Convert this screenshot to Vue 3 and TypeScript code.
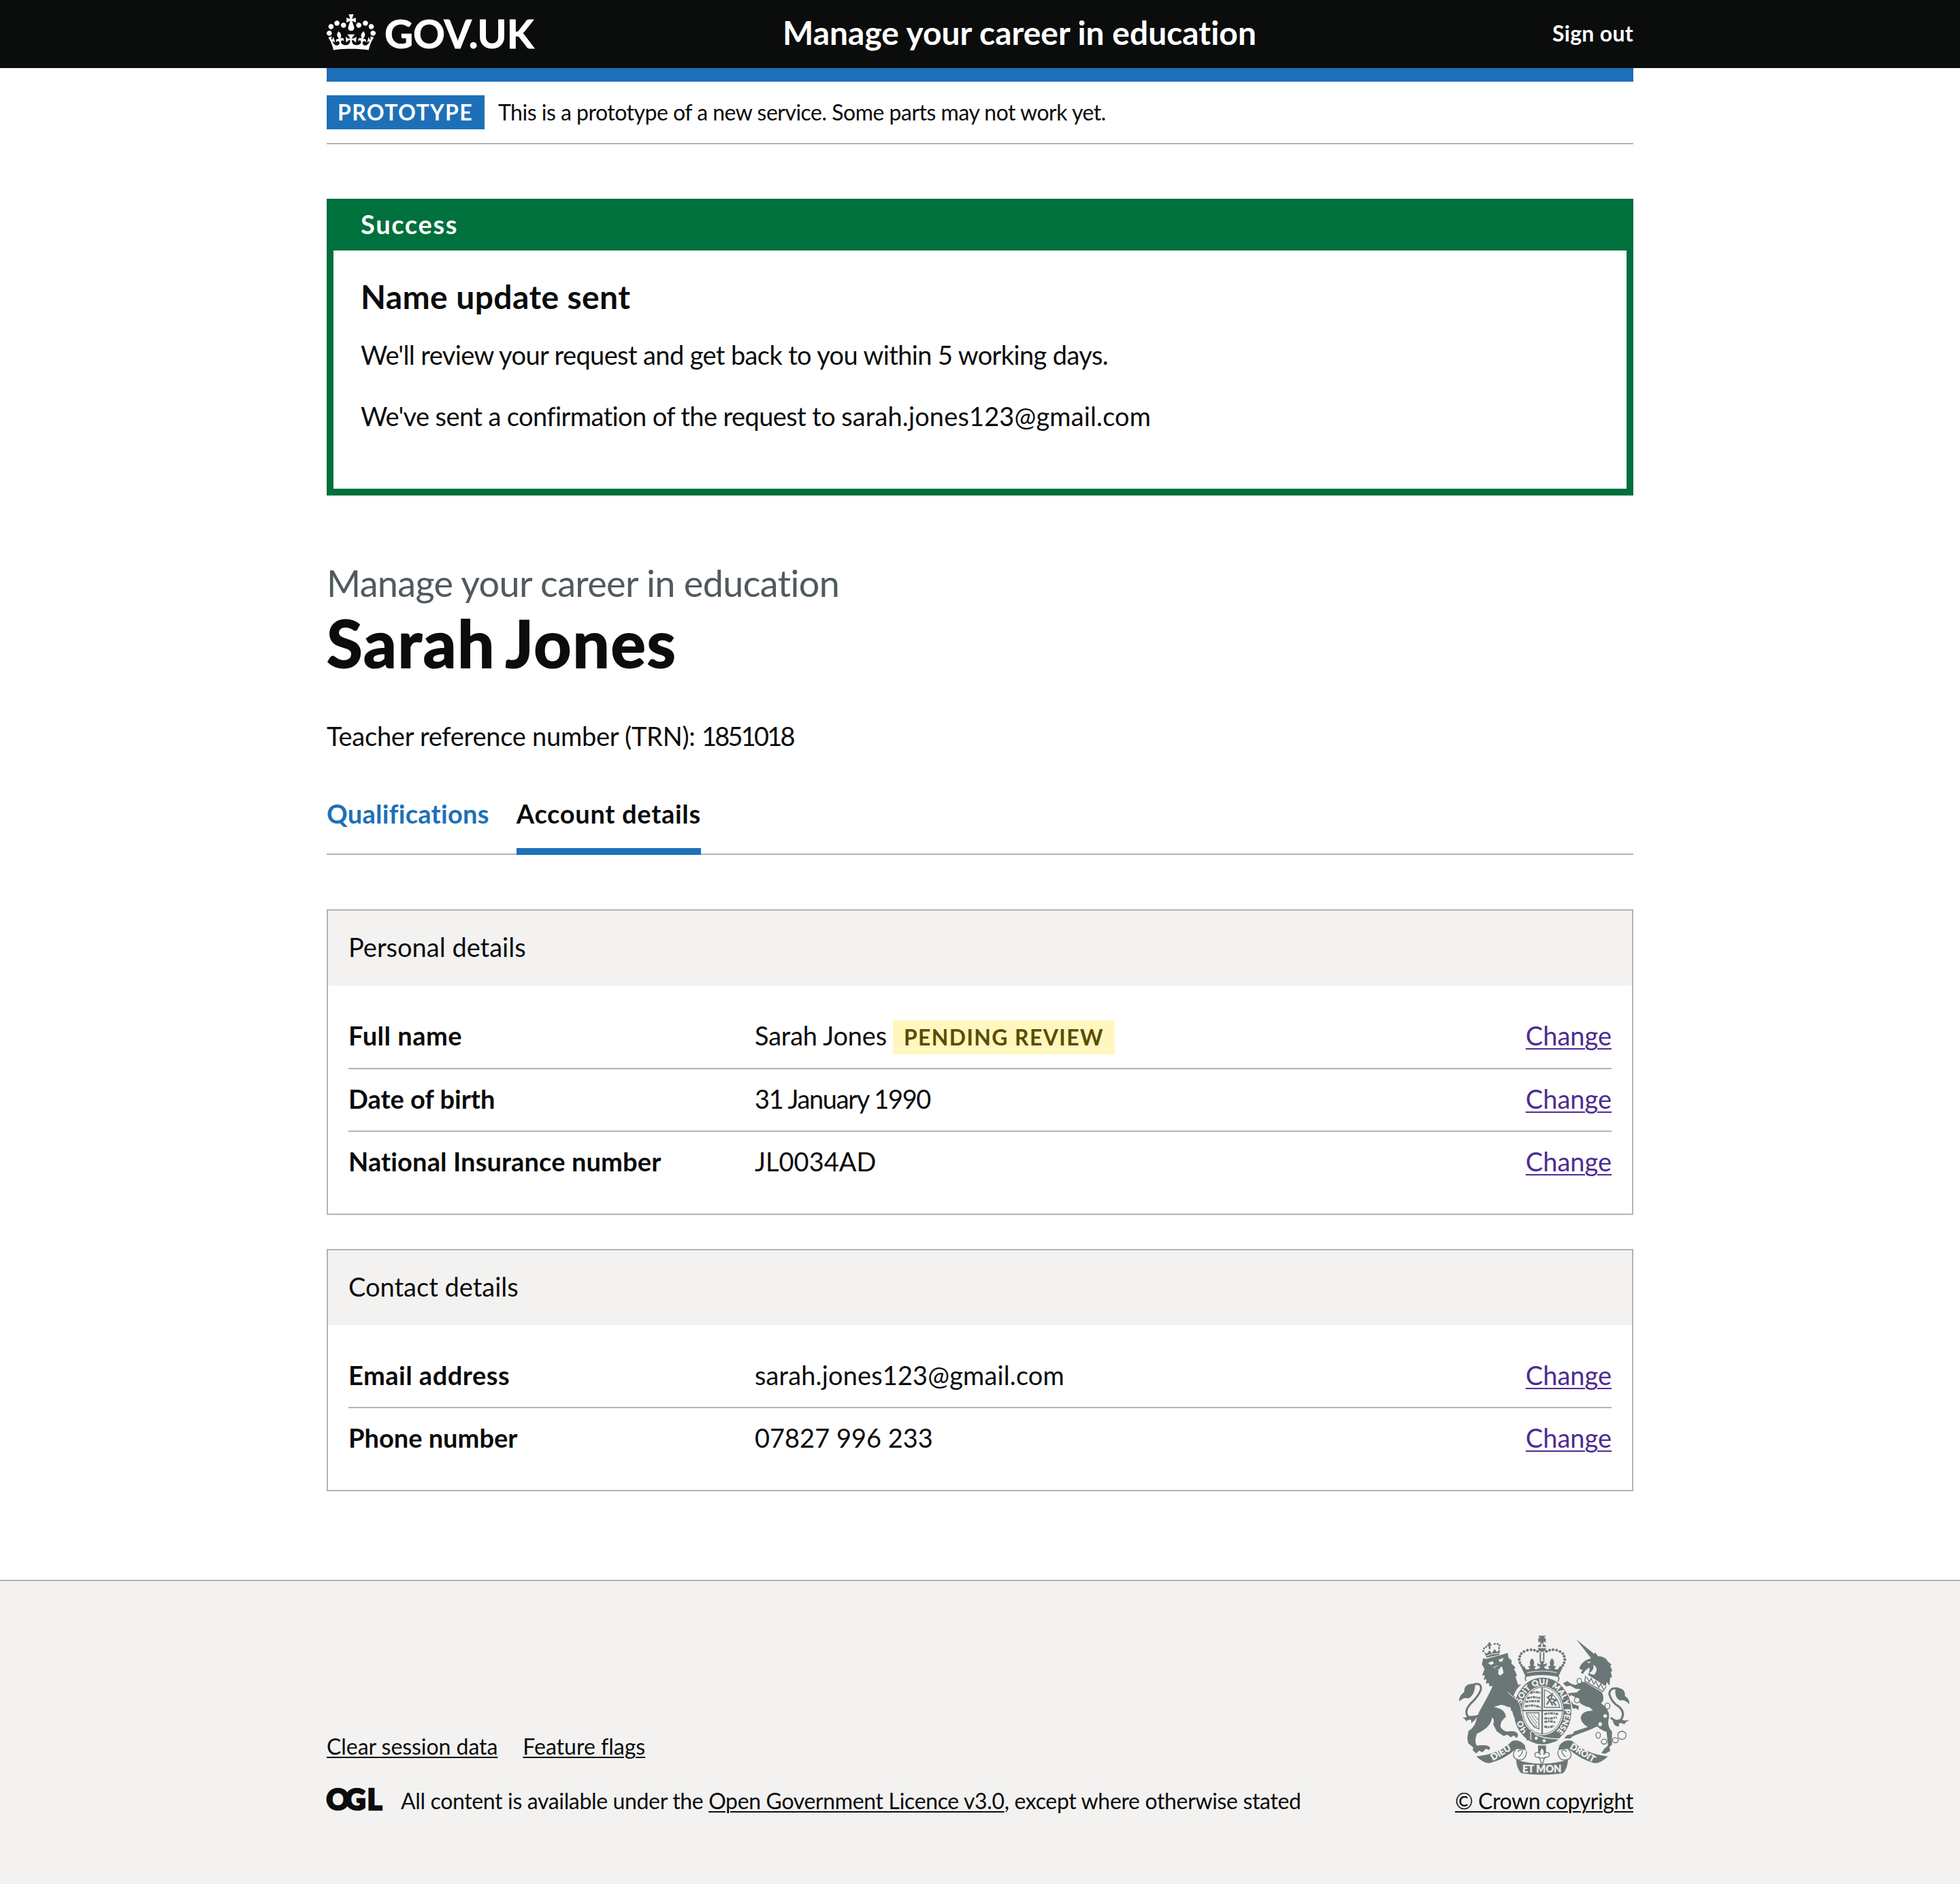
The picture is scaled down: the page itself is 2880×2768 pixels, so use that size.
<script setup lang="ts">
interface DetailRow {
  key: string
  value: string
  keyClass?: string
  valueClass?: string
  tag?: string
}

interface DetailCard {
  title: string
  rows: DetailRow[]
}

const cards: DetailCard[] = [
  {
    title: 'Personal details',
    rows: [
      { key: 'Full name', value: 'Sarah Jones', keyClass: 'loose', valueClass: 'snug', tag: 'PENDING REVIEW' },
      { key: 'Date of birth', value: '31 January 1990', valueClass: 'digits' },
      { key: 'National Insurance number', value: 'JL0034AD', keyClass: 'wide' },
    ],
  },
  {
    title: 'Contact details',
    rows: [
      { key: 'Email address', value: 'sarah.jones123@gmail.com', keyClass: 'loose', valueClass: 'wide' },
      { key: 'Phone number', value: '07827 996 233' },
    ],
  },
]

type Point = [number, number]

// Pearls along the arches of the crown, mirrored about its centre line
const pearls: Point[] = [
  [418, 137], [404, 132], [389, 130], [373, 132], [358, 138], [346, 147],
  [340, 159], [337, 173], [340, 187], [346, 199], [354, 209],
]
const lionPearls: Point[] = [[179, 136], [182, 124], [191, 117], [248, 122], [250, 111], [242, 104], [229, 104]]
const chain: [number, number, number, number][] = [
  [602, 268, 10, 12], [592, 352, 12, 12], [726, 378, 11, 13],
  [685, 507, 10, 13], [711, 535, 12, 11], [761, 529, 13, 11], [790, 507, 18, 18],
]
</script>

<template>
  <div class="page">
    <header class="header">
      <div class="container header-row">
        <a class="logo">
          <svg class="crown" viewBox="0 0 132 97" width="72" height="53" aria-hidden="true">
            <path
              fill="currentColor"
              fill-rule="evenodd"
              d="M25 30.2c3.5 1.5 7.7-.2 9.1-3.7 1.5-3.6-.2-7.8-3.9-9.2-3.6-1.4-7.6.3-9.1 3.9-1.4 3.5.3 7.5 3.9 9zM9 39.5c3.6 1.5 7.8-.2 9.2-3.7 1.5-3.6-.2-7.8-3.9-9.1-3.6-1.5-7.6.2-9.1 3.8-1.4 3.5.3 7.5 3.8 9zM4.4 57.2c3.5 1.5 7.7-.2 9.1-3.8 1.5-3.6-.2-7.7-3.9-9.1-3.5-1.5-7.6.3-9.1 3.8-1.4 3.5.3 7.6 3.9 9.1zm38.3-21.4c3.5 1.5 7.7-.2 9.1-3.8 1.5-3.6-.2-7.7-3.9-9.1-3.6-1.5-7.6.3-9.1 3.8-1.3 3.6.4 7.7 3.9 9.1zm64.4-5.6c-3.6 1.5-7.8-.2-9.1-3.7-1.5-3.6.2-7.8 3.8-9.2 3.6-1.4 7.7.3 9.2 3.9 1.3 3.5-.4 7.5-3.9 9zm15.9 9.3c-3.6 1.5-7.7-.2-9.1-3.7-1.5-3.6.2-7.8 3.7-9.1 3.6-1.5 7.7.2 9.2 3.8 1.5 3.5-.3 7.5-3.8 9zm4.7 17.7c-3.6 1.5-7.8-.2-9.2-3.8-1.5-3.6.2-7.7 3.9-9.1 3.6-1.5 7.7.3 9.2 3.8 1.3 3.5-.4 7.6-3.9 9.1zM89.3 35.8c-3.6 1.5-7.8-.2-9.2-3.8-1.4-3.6.2-7.7 3.9-9.1 3.6-1.5 7.7.3 9.2 3.8 1.4 3.6-.3 7.7-3.9 9.1zM69.7 17.7l8.9 4.7V9.3l-8.9 2.8c-.2-.3-.5-.6-.9-.9L72.4 0H59.6l3.5 11.2c-.3.3-.6.5-.9.9l-8.8-2.8v13.1l8.8-4.7c.3.3.6.7.9.9l-5 15.4v.1c-.2.8-.4 1.6-.4 2.4 0 4.1 3.1 7.5 7 8.1h.2c.3 0 .7.1 1 .1.4 0 .7 0 1-.1h.2c4-.6 7.1-4.1 7.1-8.1 0-.8-.1-1.7-.4-2.4V34l-5.1-15.4c.4-.2.7-.6 1-.9zM66 92.8c16.9 0 32.8 1.1 47.1 3.2 4-16.9 8.9-26.7 14-33.5l-9.6-3.4c1 4.9 1.1 7.2 0 10.2-1.5-1.4-3-4.3-4.2-8.7L108.6 76c2.8-2 5-3.2 7.5-3.3-4.4 9.4-10 11.9-13.6 11.2-4.3-.8-6.3-4.6-5.6-7.9 1-4.7 5.7-5.9 8-.5 4.3-8.7-3-11.4-7.6-8.8 7.1-7.2 7.9-13.5 2.1-21.1-8 6.1-8.1 12.3-4.5 20.8-4.7-5.4-12.1-2.5-9.5 6.2 3.4-5.2 7.9-2 7.2 3.1-.6 4.3-6.4 7.8-13.5 7.2-10.3-.9-10.9-8-11.2-13.8 2.5-.5 7.1 1.8 11 7.3L80.2 60c-4.1 4.4-8 5.3-12.3 5.4 1.4-4.4 8-11.6 8-11.6H55.5s6.4 7.2 7.9 11.6c-4.2-.1-8-1-12.3-5.4l1.4 16.4c3.9-5.5 8.5-7.7 10.9-7.3-.3 5.8-.9 12.8-11.1 13.8-7.2.6-12.9-2.9-13.5-7.2-.7-5 3.8-8.3 7.1-3.1 2.7-8.7-4.6-11.6-9.4-6.2 3.7-8.5 3.6-14.7-4.6-20.8-5.8 7.6-5 13.9 2.2 21.1-4.7-2.6-11.9.1-7.7 8.8 2.3-5.5 7.1-4.2 8.1.5.7 3.3-1.3 7.1-5.7 7.9-3.5.7-9-1.8-13.5-11.2 2.5.1 4.7 1.3 7.5 3.3l-4.7-15.4c-1.2 4.4-2.7 7.2-4.3 8.7-1.1-3-.9-5.3 0-10.2l-9.5 3.4c5 6.9 9.9 16.7 14 33.5 14.8-2.1 30.8-3.2 47.7-3.2z"
            />
          </svg>
          <span class="logo-text">GOV.UK</span>
        </a>
        <span class="service-name">Manage your career in education</span>
        <a class="sign-out">Sign out</a>
      </div>
    </header>

    <div class="container">
      <div class="header-bar"></div>
      <div class="phase">
        <strong class="tag">PROTOTYPE</strong>
        <span class="phase-text">This is a prototype of a new service. Some parts may not work yet.</span>
      </div>

      <main>
        <section class="banner">
          <h2 class="banner-title">Success</h2>
          <div class="banner-content">
            <h3 class="banner-heading">Name update sent</h3>
            <p class="review">We'll review your request and get back to you within 5 working days.</p>
            <p class="confirm">We've sent a confirmation of the request to <span class="wide">sarah.jones123@gmail.com</span></p>
          </div>
        </section>

        <div class="caption">Manage your career in education</div>
        <h1 class="title">Sarah Jones</h1>
        <p class="trn">Teacher reference number (TRN): <span class="trn-number">1851018</span></p>

        <nav class="tabs">
          <a class="tab">Qualifications</a>
          <a class="tab current">Account details</a>
        </nav>

        <section v-for="card in cards" :key="card.title" class="card">
          <h2 class="card-title">{{ card.title }}</h2>
          <dl class="list">
            <div v-for="row in card.rows" :key="row.key" class="row" :class="{ tagged: row.tag }">
              <dt class="key" :class="row.keyClass">{{ row.key }}</dt>
              <dd class="value">
                <span :class="row.valueClass">{{ row.value }}</span>
                <strong v-if="row.tag" class="tag tag-yellow">{{ row.tag }}</strong>
              </dd>
              <dd class="action"><a class="change">Change</a></dd>
            </div>
          </dl>
        </section>
      </main>
    </div>

    <footer class="footer">
      <div class="container footer-row">
        <div class="footer-main">
          <div class="footer-links">
            <a class="link clear">Clear session data</a>
            <a class="link">Feature flags</a>
          </div>
          <div class="licence">
            <svg class="ogl" width="84" height="49" viewBox="0 0 84 49" aria-label="OGL">
              <text x="-0.5 27 59.5" y="38">OGL</text>
            </svg>
            <span class="licence-text">All content is available under the <a class="link">Open Government Licence v3.0</a>, except where otherwise stated</span>
          </div>
        </div>
        <div class="copyright">
          <svg class="crest" viewBox="72 68 750 614" width="250" height="205" aria-hidden="true">
            <defs>
              <path id="garter" d="M440 516A97 116 0 0 1 440 284A97 116 0 0 1 440 516" />
            </defs>
            <!-- crown -->
            <path class="ink" d="M421 68H453L445 82 454 77V98L444 92 446 102H428L430 92 421 98V77L430 82Z" />
            <path class="ink" d="M434 104V118H418Q420 106 434 104ZM440 104V118H457Q454 106 440 104ZM419 123H456Q452 138 437 140 423 138 419 123ZM427 142H433V178H427ZM442 142H448V178H442Z" />
            <template v-for="([x, y], i) in pearls" :key="i">
              <circle class="ink" :cx="x" :cy="y" r="6.2" />
              <circle class="ink" :cx="875 - x" :cy="y" r="6.2" />
            </template>
            <path
              class="ink"
              d="M346 208L366 250Q437 228 509 250L528 208 515 203 510 214Q500 220 492 212L500 203 488 200Q496 180 481 168 467 180 474 200L464 203 470 212Q460 222 446 208L456 198 458 212V188Q448 196 442 194L450 180H425L433 194Q424 196 417 188V212L420 198 430 208Q412 222 404 212L411 203 400 200Q408 180 394 168 378 180 387 200L375 203 383 212Q374 222 365 214L360 203Z"
            />
            <path class="line" stroke-width="5" d="M368 268Q356 246 378 244 437 234 496 244 520 246 508 270" />
            <path class="gap" stroke-width="3" d="M372 231Q437 216 503 231" />

            <!-- lion -->
            <path class="line" stroke-width="9" d="M135 284Q172 272 168 305 158 335 122 368 92 402 112 425 130 436 156 420" />
            <path class="ink" d="M143 280Q92 276 95 316 70 334 72 358 92 338 114 344 142 330 143 280ZM86 428Q100 432 112 422L150 420Q148 440 124 454 128 444 122 438 108 438 104 446 98 434 86 428Z" />
            <path
              class="ink"
              d="M172 194L178 168 192 170 270 149 286 144 290 166 304 178 302 190 322 210 314 213 328 246 320 246 332 285 347 282Q325 300 312 332L334 352 346 388 345 420 335 428 322 413 313 425 310 402 300 398 302 384 285 382Q265 370 250 374L225 382Q276 392 278 426 252 445 255 470 268 492 290 490 326 484 332 505L327 520 312 508 300 516 285 505 268 510 238 490 222 458Q230 440 218 428 210 475 150 500 138 535 150 553 200 545 209 562L204 572 190 566 176 582 160 575 147 587 132 572 134 560 112 542 108 520 113 488Q145 470 150 430 160 400 178 372 202 330 220 290L205 290 203 276 190 280 193 260 180 262 186 244 174 242 184 215 178 204Z"
            />
            <path class="paper" d="M200 188L218 180 226 190 212 197ZM246 174L268 166 262 182 250 183ZM222 206L240 200 262 206 268 232 254 244 244 236 246 220Z" />
            <path class="ink" d="M228 206L258 198 250 216 236 216Z" />
            <path class="ink" d="M193 165L182 140 194 148 206 132 216 146 228 126 238 140 252 128 250 152Z" />
            <path class="gap" stroke-width="3" d="M190 158Q218 144 252 146" />
            <circle v-for="([x, y], i) in lionPearls" :key="'l' + i" class="ink" :cx="x" :cy="y" r="4.5" />
            <path class="ink" d="M200 99L210 97 210 104 216 105 213 114 208 112 212 126 203 127 202 114 196 115 196 106 202 106Z" />

            <!-- unicorn -->
            <path class="line" stroke-width="9" d="M775 302Q738 292 734 325 744 362 778 382 806 408 786 438 768 452 740 430" />
            <path class="ink" d="M762 297Q806 298 803 334 824 348 822 370 802 348 782 354 754 340 762 297ZM745 425Q760 448 784 436L800 442 826 440Q806 446 800 460 790 450 778 454L776 468Q760 470 752 452Z" />
            <path class="ink" d="M588 84L672 152 656 170Z" />
            <path
              class="ink"
              d="M656 166L672 142 684 158Q716 158 728 182L744 196 738 202 748 224 741 226 746 252 738 252 735 288 722 272 718 292 640 240Q650 222 646 208L628 222 618 236 608 232 616 220 602 214Q604 196 628 178Z"
            />
            <path class="paper" d="M636 184L654 182 644 190ZM664 196Q690 214 668 240 652 240 646 232 668 222 664 196Z" />
            <path class="gap" stroke-width="4" d="M628 238L722 296" />
            <path class="line" stroke-width="4" d="M630 244L626 268 706 314 720 292M634 250L646 272 654 256 666 282 674 268 688 296 696 280 708 304" />
            <path
              class="ink"
              d="M608 272L626 272 702 318Q716 350 698 366 744 398 730 440 726 470 746 490V548L735 558 738 576 716 589 699 586 712 566 728 552 722 492Q700 486 680 468L650 482 575 510 560 522 535 520 548 506 572 502 580 490 640 470Q610 455 608 428 614 398 662 398L648 384Q604 376 588 342L566 330 556 340 576 370 600 378 598 396 586 388 574 390 568 376 546 342 552 322 590 318 608 304 586 302 562 288 544 292 530 278 548 268 566 280 584 286Z"
            />
            <ellipse v-for="([x, y, rx, ry], i) in chain" :key="'c' + i" class="ring" :cx="x" :cy="y" :rx="rx" :ry="ry" />
            <ellipse class="paper" cx="716" cy="422" rx="8" ry="8" />
            <ellipse class="paper" cx="694" cy="458" rx="8" ry="9" />

            <!-- garter -->
            <ellipse class="garter-band" cx="440" cy="400" rx="129" ry="149" />
            <ellipse class="paper" cx="440" cy="398" rx="92" ry="108" />
            <text class="motto" font-size="35"><textPath href="#garter" startOffset="72">HO</textPath></text>
            <text class="motto" font-size="35"><textPath href="#garter" startOffset="200">SOIT</textPath></text>
            <text class="motto" font-size="35"><textPath href="#garter" startOffset="291">QUI</textPath></text>
            <text class="motto" font-size="35"><textPath href="#garter" startOffset="376">MAL</textPath></text>
            <text class="motto" font-size="32"><textPath href="#garter" startOffset="457">Y</textPath></text>
            <text class="motto" font-size="35"><textPath href="#garter" startOffset="493">PENSE</textPath></text>
            <ellipse class="line" stroke-width="3" cx="440" cy="398" rx="87" ry="103" />
            <path class="line" stroke-width="7" d="M438 296V500M350 398H530" />
            <path class="line" stroke-width="4" d="M448 306V384H516Q506 330 448 306ZM368 408H424V480Q384 464 368 408Z" />
            <path class="line" stroke-width="3" d="M376 414L416 470M388 414L418 456M400 414L420 440M374 426L404 474" />
            <path class="line" stroke-width="9" stroke-dasharray="13 3 6 3" d="M386 322Q404 312 430 320M372 344Q400 334 430 344M364 360Q400 354 430 358M362 380Q400 370 430 384M448 414Q476 406 508 414M448 431Q476 437 502 427M448 449Q470 441 498 451M448 468Q470 476 490 464" />
            <path class="line" stroke-width="7" d="M458 372L472 350 462 340 482 326 478 346 500 352 486 362 500 376M472 350L484 376" />
            <path class="ink" d="M362 488Q374 476 392 486L398 506Q450 530 506 520L506 530Q450 556 392 528L372 530 364 510 374 506Z" />
            <path class="gap" stroke-width="4" d="M392 488Q382 498 390 510 382 520 392 526M404 502Q450 524 510 522" />
            <circle class="paper" cx="412" cy="520" r="7" />
            <circle class="paper" cx="447" cy="531" r="7" />
            <!-- paw and hoof laid over the garter -->
            <path class="ink" d="M296 322L332 354 346 388 345 420 335 428 322 413 313 425 306 400 296 380Z" />
            <path class="gap" stroke-width="3" d="M287 318L332 356Q346 378 348 418" />

            <!-- pendant -->
            <path class="ink" d="M420 552H455V585H420Z" />
            <path class="crest-fleur" d="M437 562Q452 576 445 594 452 576 468 586 474 602 458 604 448 602 446 612L442 628H433L429 612Q427 602 416 604 402 602 407 586 424 576 430 594 422 576 437 562Z" />
            <path class="line" stroke-width="4" d="M424 607H452" />

            <!-- ribbons -->
            <path class="ink" d="M148 600Q250 590 306 532 340 522 362 552L366 574Q350 566 322 568 270 615 205 630 180 630 148 600Z" />
            <path class="ink" d="M728 600Q630 590 570 532 535 522 514 552L508 574Q526 566 554 568 610 615 668 630 695 632 728 600Z" />
            <path class="line" stroke-width="4" d="M322 568Q304 592 316 606 328 620 352 614 372 600 368 576M554 568Q572 592 562 606 550 620 524 614 504 600 508 576" />
            <path class="line" stroke-width="4" d="M330 578Q350 566 352 578 348 592 334 602M546 578Q526 566 524 578 528 592 542 602" />
            <path class="ink" d="M323 614Q437 650 552 614 550 654 530 674 437 688 346 674 326 654 323 614Z" />
            <text class="motto" font-size="40" text-anchor="middle" transform="translate(262 595) rotate(-31)">DIEU</text>
            <text class="motto" font-size="39" text-anchor="middle" transform="translate(610 595) rotate(31)">DROIT</text>
            <text class="motto" font-size="44" text-anchor="middle" x="437" y="671">ET MON</text>
          </svg>
          <a class="link crown-link">© Crown copyright</a>
        </div>
      </div>
    </footer>
  </div>
</template>

<style>
body {
  margin: 0;
  background: #fff;
}
</style>

<style scoped>
.page {
  min-height: 2768px;
  display: flex;
  flex-direction: column;
  font-family: Lato, "Liberation Sans", sans-serif;
  font-variant-ligatures: none;
  font-size: 38px;
  line-height: 50px;
  color: #0b0c0c;
}
h1, h2, h3, p, dl, dd {
  margin: 0;
}
.container {
  width: 1920px;
  margin: 0 auto;
}

.header {
  height: 100px;
  background: #0b0c0c;
  color: #fff;
  font-weight: 700;
}
.header-row {
  display: flex;
  align-items: flex-start;
}
.logo {
  width: 670px;
  display: flex;
  align-items: flex-start;
}
.crown {
  margin-top: 21px;
}
.logo-text {
  margin: 18px 0 0 13px;
  font-size: 58px;
  line-height: 61px;
  -webkit-text-stroke: 1px currentColor;
}
.service-name {
  flex: 1;
  padding-top: 18px;
  font-size: 48px;
  line-height: 59px;
  letter-spacing: -0.02px;
}
.sign-out {
  padding-top: 24px;
  font-size: 32px;
  line-height: 49px;
  letter-spacing: 0.3px;
}
.header-bar {
  height: 20px;
  background: #1d70b8;
}

.phase {
  display: flex;
  padding: 20px 0;
  border-bottom: 2px solid #b1b4b6;
}
.tag {
  box-sizing: border-box;
  width: 232px;
  height: 50px;
  padding-left: 16px;
  background: #1d70b8;
  color: #fff;
  font-size: 32px;
  line-height: 49px;
  letter-spacing: 1.35px;
  white-space: nowrap;
}
.phase-text {
  height: 50px;
  margin-left: 20px;
  font-size: 32px;
  line-height: 49px;
  letter-spacing: -0.5px;
}

.banner {
  box-sizing: border-box;
  height: 436px;
  margin-top: 80px;
  border: 10px solid #00703c;
}
.banner-title {
  height: 64px;
  padding: 2px 0 0 40px;
  background: #00703c;
  color: #fff;
  font-size: 38px;
  letter-spacing: 1.65px;
}
.banner-content {
  padding: 38px 40px 0;
}
.banner-heading {
  font-size: 48px;
  line-height: 59px;
  letter-spacing: 0.4px;
}
.review {
  margin-top: 31px;
  letter-spacing: -0.62px;
}
.confirm {
  margin-top: 40px;
  letter-spacing: -0.6px;
}

.caption {
  margin-top: 98px;
  color: #505a5f;
  font-size: 54px;
  line-height: 61px;
  letter-spacing: -0.66px;
}
.title {
  margin-top: 6px;
  font-size: 96px;
  line-height: 101px;
  letter-spacing: 1.9px;
  word-spacing: -8px;
  -webkit-text-stroke: 2px currentColor;
}
.trn {
  margin-top: 62px;
  letter-spacing: -0.25px;
}
.trn-number {
  letter-spacing: -2.8px;
}

.tabs {
  display: flex;
  gap: 40px;
  margin-top: 64px;
  border-bottom: 2px solid #b1b4b6;
  font-weight: 700;
}
.tab {
  padding-bottom: 34px;
  color: #1d70b8;
  letter-spacing: 0.3px;
}
.tab.current {
  margin-bottom: -2px;
  padding-bottom: 26px;
  border-bottom: 10px solid #1d70b8;
  color: #0b0c0c;
  letter-spacing: 0.7px;
}

.card {
  margin-top: 80px;
  border: 2px solid #b1b4b6;
}
.card + .card {
  margin-top: 50px;
}
.card-title {
  height: 82px;
  padding: 28px 0 0 30px;
  background: #f3f2f1;
  font-size: 38px;
  font-weight: 400;
}
.list {
  padding: 30px;
}
.row {
  display: flex;
  padding: 18px 0 22px;
  border-bottom: 2px solid #b1b4b6;
}
.row.tagged {
  padding-bottom: 23px;
}
.row:last-child {
  border-bottom: 0;
}
.key {
  width: 597px;
  font-weight: 700;
}
.value {
  flex: 1;
  display: flex;
  height: 50px;
}
.wide {
  letter-spacing: 0.13px;
}
.loose {
  letter-spacing: 0.5px;
}
.snug {
  letter-spacing: -0.2px;
}
.digits {
  letter-spacing: -1.37px;
}
.tag-yellow {
  width: 326px;
  margin: 3px 0 0 9px;
  background: #fff7bf;
  color: #594d00;
}
.change {
  color: #4c2c92;
  text-decoration: underline;
  text-decoration-thickness: 2px;
  text-underline-offset: 4px;
}

.footer {
  flex: 1;
  margin-top: 130px;
  border-top: 2px solid #b1b4b6;
  background: #f3f2f1;
  font-size: 32px;
  line-height: 49px;
}
.footer-row {
  display: flex;
  justify-content: space-between;
}
.footer-main {
  padding-top: 218px;
}
.footer-links {
  display: flex;
  gap: 37px;
}
.clear {
  letter-spacing: -0.05px;
}
.link {
  color: #0b0c0c;
  text-decoration: underline;
  text-decoration-thickness: 2px;
  text-underline-offset: 3px;
}
.licence {
  display: flex;
  margin-top: 31px;
  letter-spacing: -0.35px;
}
.ogl {
  margin-right: 25px;
  overflow: visible;
  fill: #0b0c0c;
  stroke: #0b0c0c;
  stroke-width: 2.6px;
  font-size: 42px;
  font-weight: 900;
  letter-spacing: 0;
}
.copyright {
  width: 262px;
  padding-top: 80px;
}
.crest {
  display: block;
  margin: 0 auto 13px;
}
.crown-link {
  letter-spacing: -0.38px;
  white-space: nowrap;
}
.ink {
  fill: #6b7777;
}
.paper {
  fill: #f3f2f1;
}
.line {
  fill: none;
  stroke: #6b7777;
}
.gap {
  fill: none;
  stroke: #f3f2f1;
}
.ring,
.crest-fleur {
  fill: #f3f2f1;
  stroke: #6b7777;
  stroke-width: 4px;
}
.garter-band {
  fill: #6b7777;
  stroke: #f3f2f1;
  stroke-width: 4px;
}
.motto {
  fill: #f3f2f1;
  stroke: #f3f2f1;
  stroke-width: 1px;
  font-weight: 900;
}
</style>
